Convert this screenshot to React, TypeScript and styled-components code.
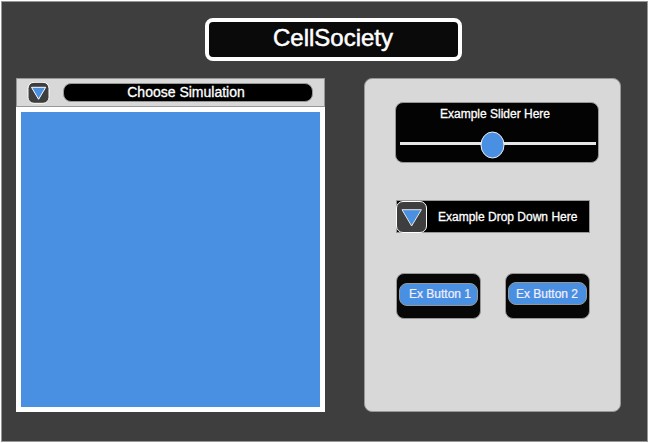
import React from "react";
import styled, { createGlobalStyle } from "styled-components";

const GlobalStyle = createGlobalStyle`
  * { box-sizing: border-box; }
  body { margin: 0; background: #fff; font-family: "Liberation Sans", Arial, Helvetica, sans-serif; }
`;

const BLUE = "#4a90e2";
const EDGE = "#979797";

const Window = styled.main`
  width: 647px;
  height: 441px;
  margin: 1px;
  padding: 16px 26px 0 14px;
  border: 1px solid ${EDGE};
  background: #3e3e3e;
  color: #fff;
`;

const Title = styled.h1`
  width: 257px;
  height: 43px;
  margin: 0 0 17px 189px;
  padding-right: 1px;
  border: 4px solid #fff;
  border-radius: 8px;
  background: #0a0a0a;
  font-size: 24px;
  font-weight: 400;
  line-height: 31px;
  text-align: center;
  -webkit-text-stroke: 0.5px #fff;
`;

const Columns = styled.div`
  display: flex;
  justify-content: space-between;
`;

const Simulation = styled.section`
  width: 309px;
`;

const Chooser = styled.header`
  display: flex;
  height: 29px;
  padding: 3px 11px 0 10px;
  border: 1px solid ${EDGE};
  background: #d8d8d8;
`;

const ChooserLabel = styled.div`
  flex: none;
  width: 250px;
  height: 19px;
  margin: 1px 0 0 13px;
  padding-right: 4px;
  border: 1px solid ${EDGE};
  border-radius: 8px;
  background: #000;
  font-size: 14px;
  line-height: 17px;
  text-align: center;
  -webkit-text-stroke: 0.3px #fff;
`;

const Canvas = styled.div`
  height: 305px;
  border: 5px solid #fff;
  background: ${BLUE};
`;

const Controls = styled.aside`
  width: 257px;
  height: 334px;
  padding: 23px 21px 0 30px;
  border: 1px solid ${EDGE};
  border-radius: 8px;
  background: #d8d8d8;
  font-size: 12px;
`;

const SliderCard = styled.div`
  width: 204px;
  height: 61px;
  padding: 4px 2px 0 4px;
  border: 1px solid ${EDGE};
  border-radius: 8px;
  background: #030303;
`;

const SliderLabel = styled.div`
  padding-right: 6px;
  line-height: 14px;
  text-align: center;
  -webkit-text-stroke: 0.3px #fff;
`;

const SliderTrack = styled.svg`
  display: block;
  margin-top: 9px;
`;

const DropDown = styled.div`
  display: flex;
  width: 194px;
  height: 33px;
  margin: 37px 0 40px 1px;
  border: 1px solid ${EDGE};
  background: #000;
`;

const DropDownLabel = styled.span`
  margin-left: 11px;
  line-height: 33px;
  white-space: nowrap;
  -webkit-text-stroke: 0.3px #fff;
`;

const ArrowIcon = styled.svg<{ $shift?: number }>`
  flex: none;
  display: block;
  margin-left: ${(p) => p.$shift ?? 0}px;
`;

const Buttons = styled.div`
  display: flex;
  gap: 24px;
  margin-left: 1px;
`;

const ButtonCase = styled.div<{ $top: number }>`
  width: 85px;
  height: 46px;
  padding: ${(p) => p.$top}px 2px 0;
  border: 1px solid ${EDGE};
  border-radius: 8px;
  background: #070707;
`;

const Button = styled.button<{ $pad: string }>`
  display: block;
  width: 79px;
  height: 23px;
  padding: ${(p) => p.$pad};
  border: 1px solid ${EDGE};
  border-radius: 8px;
  background: ${BLUE};
  color: #f5efff;
  font: 12px/20px "Liberation Sans", Arial, sans-serif;
  text-align: left;
  white-space: nowrap;
  -webkit-text-stroke: 0.2px #f5efff;
`;

export default function App() {
  return (
    <>
      <GlobalStyle />
      <Window>
        <Title>CellSociety</Title>
        <Columns>
          <Simulation>
            <Chooser>
              <ArrowIcon width="23" height="23" viewBox="0 0 23 23">
                <rect x="1" y="0.3" width="21" height="21" rx="6" fill="#3e3e3e" stroke="#fff" />
                <path d="M4.5 5.3H18.7L11.6 17.3Z" fill={BLUE} stroke="#fff" />
              </ArrowIcon>
              <ChooserLabel>Choose Simulation</ChooserLabel>
            </Chooser>
            <Canvas />
          </Simulation>
          <Controls>
            <SliderCard>
              <SliderLabel>Example Slider Here</SliderLabel>
              <SliderTrack width="196" height="30" viewBox="0 0 196 30">
                <path d="M0 13.5H196" stroke="#e6e6e6" strokeWidth="3" />
                <ellipse cx="92.5" cy="15" rx="11.5" ry="13" fill={BLUE} stroke="#f0f0f0" />
              </SliderTrack>
            </SliderCard>
            <DropDown>
              <ArrowIcon $shift={-1} width="31" height="32" viewBox="0 0 31 32">
                <rect x="0.5" y="0.5" width="30" height="31" rx="6.5" fill="#3e3e3e" stroke="#fff" />
                <path d="M6 8.7H25.4L15.6 25Z" fill={BLUE} stroke="#e4e4e4" />
              </ArrowIcon>
              <DropDownLabel>Example Drop Down Here</DropDownLabel>
            </DropDown>
            <Buttons>
              <ButtonCase $top={9}>
                <Button $pad="0 0 1px 9px">Ex Button 1</Button>
              </ButtonCase>
              <ButtonCase $top={8}>
                <Button $pad="1px 0 0 7px">Ex Button 2</Button>
              </ButtonCase>
            </Buttons>
          </Controls>
        </Columns>
      </Window>
    </>
  );
}
